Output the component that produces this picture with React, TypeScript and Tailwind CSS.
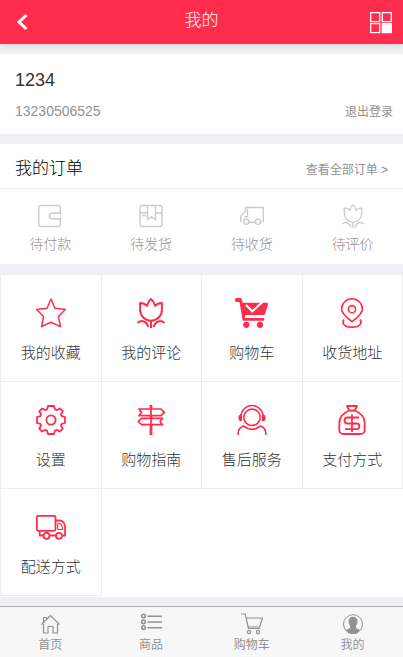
import type { ReactNode } from 'react';

type IconProps = { className?: string; box?: string; width?: number; children: ReactNode };

function Icon({ className = '', box = '0 0 30 30', width = 2, children }: IconProps) {
  return (
    <svg
      viewBox={box}
      className={className}
      fill="none"
      stroke="currentColor"
      strokeWidth={width}
      strokeLinejoin="round"
      aria-hidden="true"
    >
      {children}
    </svg>
  );
}

const tulip = (
  <>
    <path d="M4.100 4.900c2.900 0 5 .9 6.900 2.900C12 4.500 13.200 2.200 15 1c1.800 1.200 3 3.500 4 6.800 1.900-2 4-2.900 6.900-2.900V12a10.900 10.700 0 0 1-21.800 0z" />
    <path d="M15 22.700V30M1.500 25c4-3.500 9-2 11 4M28.500 25c-4-3.500-9-2-11 4" />
  </>
);

const orders = [
  {
    label: '待付款',
    icon: (
      <Icon box="0 0 24 24" width={1.400} className="size-6">
        <path d="M22.300 9V3.500a2 2 0 0 0-2-2H2.700a2 2 0 0 0-2 2v17a2 2 0 0 0 2 2h17.600a2 2 0 0 0 2-2V15" />
        <path d="M23.500 9.300h-9.300a2.700 2.700 0 0 0 0 5.500h9.300" />
        <path d="M21.500 12h1.500" />
      </Icon>
    ),
  },
  {
    label: '待发货',
    icon: (
      <Icon box="0 0 24 24" width={1.400} className="size-6">
        <rect x="1" y="1.500" width="22" height="21" rx="2" />
        <path d="M1 9h7.500M16.500 9H23M8.500 1.500V15.700l4-3 4 3V1.500M3 11.500h4" />
      </Icon>
    ),
  },
  {
    label: '待收货',
    icon: (
      <Icon box="0 0 24 24" width={1.400} className="size-6">
        <path d="M.8 18.200V12l4.700-4.500V3.500h17.800v14.700M4.500 12.800h3V5M9 18.200h6" />
        <circle cx="6.200" cy="17.700" r="2.600" />
        <circle cx="18" cy="17.700" r="2.600" />
      </Icon>
    ),
  },
  {
    label: '待评价',
    icon: <Icon width={1.700} className="size-6">{tulip}</Icon>,
  },
];

const services = [
  {
    label: '我的收藏',
    icon: (
      <Icon width={1.500} className="size-[30px]">
        <path d="M15 1l4 9.200 10.300 1.200-6.800 7.200 2 10L15 24.200l-9.500 4.400 2-10L.7 11.400 11 10.200z" />
      </Icon>
    ),
  },
  { label: '我的评论', icon: <Icon className="size-[30px]">{tulip}</Icon> },
  {
    label: '购物车',
    icon: (
      <Icon box="0 0 34 30" className="h-[30px] w-[34px]">
        <path
          d="M1.500 0H5c1 0 1.500.4 1.800 1.400l.8 3.300h10.900L25 4.700h6.500c1.400 0 1.800.8 1.500 1.800l-2.800 9c-.3 1-.9 1.500-2 1.500H10v3h18.200c1.600 0 1.600 2.700 0 2.700H9c-1 0-1.500-.5-1.600-1.500L4.500 4h-3C-.5 4-.5 0 1.500 0z"
          fill="currentColor"
          stroke="none"
        />
        <path d="M11 7l6.300 6.300L27.500 4" stroke="#fff" strokeLinejoin="miter" />
        <g fill="currentColor" stroke="none">
          <circle cx="11.300" cy="26.800" r="3.100" />
          <circle cx="25" cy="26.800" r="3.100" />
        </g>
      </Icon>
    ),
  },
  {
    label: '收货地址',
    icon: (
      <Icon width={1.600} className="size-[30px]">
        <path d="M15 23.700C8 18.500 4.600 15 4.600 11a10.400 10.200 0 0 1 20.800 0c0 4-3.400 7.500-10.400 12.700z" />
        <circle cx="15" cy="11.200" r="3.600" />
        <path d="M7 21.500c-2.500 3.300-.5 7.600 8 7.600s10.500-4.300 8-7.600" />
      </Icon>
    ),
  },
  {
    label: '设置',
    icon: (
      <Icon width={1.800} className="size-[30px]">
        <path d="M12 1h6l1 3.300 2 .8 2.800-1.700 3 3-1.900 2.800.8 2 3.300.8v6l-3.300.8-.8 2 1.900 2.800-3 3-2.800-1.700-2 .8-1 3.300h-6l-1-3.300-2-.8-2.800 1.700-3-3 1.900-2.800-.8-2L1 18v-6l3.300-.8.8-2-1.900-2.800 3-3L9 5.100l2-.8z" />
        <circle cx="15" cy="15" r="4.600" />
      </Icon>
    ),
  },
  {
    label: '购物指南',
    icon: (
      <Icon width={1.700} className="size-[30px]">
        <path d="M3 4h22l3.300 3.400L25 10.700H3l2.500-3.300zM26.500 13.300H5.500l-3.300 3.200 3.300 3.200h21L24 16.500z" />
        <path d="M15 0v4M15 10.700v2.600M15 19.700V30" strokeWidth="2.800" />
        <path d="M15 4v16" />
      </Icon>
    ),
  },
  {
    label: '售后服务',
    icon: (
      <Icon width={1.600} className="size-[30px]">
        <circle cx="15" cy="12.300" r="8.200" />
        <path d="M4 11.500a11 11 0 0 1 22 0" />
        <path d="M4.300 10v5.500C1.500 15.500 1.500 10 4.300 10zM25.700 10v5.500c2.800 0 2.800-5.500 0-5.500z" fill="currentColor" />
        <path d="M1 30c0-4.500 1.500-7.800 5.500-9C12 25.300 18 25.300 23.500 21c4 1.200 5.500 4.500 5.500 9" />
      </Icon>
    ),
  },
  {
    label: '支付方式',
    icon: (
      <Icon width={1.800} className="size-[30px]">
        <path d="M10 1h10l-2.300 4.500h-5.400zM12.300 5.500C6 8 2.300 12.500 2.300 18v7a4 4 0 0 0 4 4h17.400a4 4 0 0 0 4-4v-7c0-5.500-3.700-10-10-12.500" />
        <path d="M22 12.500H10.500a3 3 0 0 0 0 6h9a2.800 2.800 0 0 1 0 5.700H8M15 9.500V27" />
      </Icon>
    ),
  },
  {
    label: '配送方式',
    icon: (
      <Icon width={1.800} className="size-[30px]">
        <rect x=".9" y="3.800" width="18.600" height="15" rx="1.500" />
        <path d="M19.500 8.500h4.300c3.500 0 5.300 3.500 5.300 7.500v7.500h-2.500M3.700 19v4.500H7M14 23.500h5.500" />
        <path d="M21.700 11v6.500h4.800c0-3.500-1.300-6.500-4.800-6.500z" strokeWidth="1.100" />
        <circle cx="10.500" cy="23.800" r="3" />
        <circle cx="23" cy="23.800" r="3" />
      </Icon>
    ),
  },
];

const tabs = [
  {
    label: '首页',
    icon: (
      <Icon box="0 0 22 22" width={1.200} className="size-[22px]">
        <path d="M2.500 11.500l9-9 9 9M4.500 11v9H9v-6.500h5V20h4.500v-9M4.500 9V4.500h3V6" />
      </Icon>
    ),
  },
  {
    label: '商品',
    icon: (
      <Icon box="0 0 22 22" width={1.600} className="size-[22px]">
        <circle cx="3.500" cy="3" r="1.800" />
        <circle cx="3.500" cy="8.800" r="1.800" />
        <circle cx="3.500" cy="14.600" r="1.800" />
        <path d="M7.500 3.200H22M7.500 9H22M7.500 14.700H22" />
      </Icon>
    ),
  },
  {
    label: '购物车',
    icon: (
      <Icon box="0 0 22 22" width={1.200} className="size-[22px]">
        <path d="M0 1h4.200l3.300 14.500h11.700M5 5h16.500l-3 9H7" />
        <circle cx="8" cy="19" r="1.600" />
        <circle cx="17" cy="19" r="1.600" />
      </Icon>
    ),
  },
  {
    label: '我的',
    icon: (
      <Icon box="0 0 22 22" width={1} className="size-[22px]">
        <circle cx="11" cy="11.200" r="9.500" />
        <path
          d="M11 4.200c3 0 4.300 1.800 4 4.500-.2 2.200-1 3.300-1.500 4.200v2c.3 1 2.500 1.300 4 2.300-3.500 4.500-9.500 4.500-13 0 1.500-1 3.700-1.300 4-2.300v-2C8 12 7.200 10.900 7 8.700c-.3-2.700 1-4.500 4-4.500z"
          fill="currentColor"
        />
      </Icon>
    ),
  },
];

export default function App() {
  return (
    <div className="flex min-h-screen flex-col bg-[#efeff4] font-['Liberation_Sans','Noto_Sans_CJK_SC',sans-serif] text-[#333]">
      <header className="z-10 flex h-11 items-center justify-between bg-[#ff2d4b] px-2 text-white shadow-[0_1px_6px_#ccc]">
        <button aria-label="返回" className="flex w-7 items-center pl-2">
          <Icon box="0 0 12 18" width={3} className="h-[18px] w-3">
            <path d="M10.500 2L3 9l7.500 7" strokeLinejoin="miter" />
          </Icon>
        </button>
        <h1 className="pb-0.5 text-[17px] leading-6 font-light">我的</h1>
        <button aria-label="菜单" className="flex w-7 justify-end pr-0.5">
          <Icon box="0 0 24 24" width={1.300} className="size-6">
            <path d="M1.700 2.700h9v9h-9zM13.300 2.700h9v9h-9zM1.700 13.700h9v9h-9z" strokeLinejoin="miter" />
            <path d="M13.300 13.700h9v9h-9z" fill="currentColor" />
          </Icon>
        </button>
      </header>

      <main className="flex-1 pt-2.5">
        <section className="h-20 bg-white pt-3.5 pr-2.5 pl-[15px]">
          <p className="text-[18px] leading-6">1234</p>
          <div className="mt-1.5 flex items-center justify-between text-[#929292]">
            <span className="text-sm leading-6">13230506525</span>
            <button className="pt-0.5 text-xs leading-6">退出登录</button>
          </div>
        </section>

        <section className="mt-2.5 bg-white">
          <div className="flex h-[45px] items-center justify-between border-b border-[#eee] px-[15px]">
            <h2 className="pt-1.5 text-[17px] leading-6 font-light text-black">我的订单</h2>
            <a href="#orders" className="pt-2 text-xs leading-6 text-[#929292]">查看全部订单 &gt;</a>
          </div>
          <ul className="grid h-[75px] grid-cols-4">
            {orders.map((item) => (
              <li key={item.label}>
                <a href="#orders" className="flex flex-col items-center pt-[15px] text-[#ccc]">
                  {item.icon}
                  <span className="mt-1 text-sm leading-6 font-light text-[#929292]">{item.label}</span>
                </a>
              </li>
            ))}
          </ul>
        </section>

        <section className="mt-2.5 bg-white pb-px">
          <ul className="grid grid-cols-4 border-t border-l border-[#eee]">
            {services.map((item) => (
              <li key={item.label} className="h-[107px] border-r border-b border-[#eee]">
                <a href="#service" className="flex flex-col items-center pt-[23px] text-[#ff2d4b]">
                  {item.icon}
                  <span className="mt-[13px] text-[15px] leading-6 font-light text-[#333]">{item.label}</span>
                </a>
              </li>
            ))}
          </ul>
        </section>
      </main>

      <nav className="grid h-[51px] grid-cols-4 border-t border-[#b2b2b2] bg-[#f7f7f7]">
        {tabs.map((item) => (
          <a key={item.label} href="#tab" className="flex flex-col items-center pt-1.5 text-[#929292]">
            {item.icon}
            <span className="text-xs leading-5">{item.label}</span>
          </a>
        ))}
      </nav>
    </div>
  );
}
